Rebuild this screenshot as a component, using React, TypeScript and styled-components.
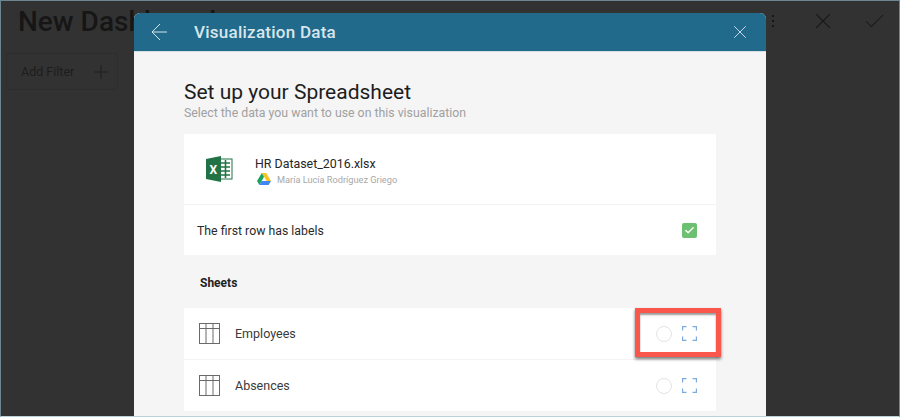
import React from "react";
import styled, { createGlobalStyle } from "styled-components";
import { Check, Plus, X } from "lucide-react";

const GlobalStyle = createGlobalStyle`
  html, body {
    margin: 0;
    padding: 0;
    background: #323232;
    font-family: Roboto, "Liberation Sans", sans-serif;
    overflow: hidden;
  }
`;

const Frame = styled.div`
  position: relative;
  width: 900px;
  height: 417px;
  box-sizing: border-box;
  overflow: hidden;
  background: #323232;
  border: 1px solid #6d8591;
  border-bottom-color: #b9d3d8;
`;

// dashboard behind the dialog
const TopBar = styled.header`
  display: flex;
  align-items: center;
  justify-content: space-between;
  height: 40px;
  padding: 0 12px 0 17px;
`;

const PageTitle = styled.h1`
  margin: 0;
  font-size: 28px;
  font-weight: 500;
  color: #161616;
`;

const TopActions = styled.div`
  display: flex;
  align-items: center;
  gap: 26px;
  color: #1a1a1a;
`;

const Dots = styled.div`
  display: flex;
  flex-direction: column;
  gap: 3px;
  margin-right: 10px;

  span {
    width: 2px;
    height: 2px;
    background: #161616;
  }
`;

const FilterButton = styled.div`
  display: flex;
  align-items: center;
  justify-content: space-between;
  width: 112px;
  height: 37px;
  box-sizing: border-box;
  margin: 12px 0 0 5px;
  padding: 0 5px 0 14px;
  border: 1px solid #2d2d2d;
  border-radius: 4px;
  font-size: 12.5px;
  color: #1d1d1d;
`;

const Dialog = styled.section`
  position: absolute;
  left: 133px;
  top: 12px;
  width: 632px;
  height: 410px;
  background: #f5f5f5;
  border-radius: 6px 6px 0 0;
  overflow: hidden;
`;

const DialogHeader = styled.header`
  display: flex;
  align-items: center;
  height: 38px;
  padding: 0 15px 0 17px;
  background: #216a8b;
  border-bottom: 1px solid #d5dfe3;
  color: #d3e3ea;
`;

const DialogTitle = styled.h2`
  flex: 1;
  margin: 0 0 0 27px;
  font-size: 17px;
  font-weight: 500;
  letter-spacing: 0.25px;
  color: #d7e6ec;
`;

const DialogBody = styled.div`
  padding: 27px 50px 0;
`;

const Heading = styled.h3`
  margin: 0;
  font-size: 21px;
  line-height: 27px;
  font-weight: 400;
  color: #1d1d1d;
`;

const SubHeading = styled.p`
  margin: 0 0 14px;
  font-size: 12.3px;
  line-height: 14px;
  color: #a0a0a0;
`;

const Card = styled.div`
  background: #fff;
`;

const FileRow = styled.div`
  display: flex;
  align-items: center;
  height: 71px;
  padding-left: 22px;
  border-bottom: 1px solid #f2f2f2;
  box-sizing: border-box;
`;

const FileMeta = styled.div`
  margin: 3px 0 0 22px;
`;

const FileName = styled.div`
  font-size: 12.4px;
  line-height: 15px;
  color: #262626;
`;

const Owner = styled.div`
  display: flex;
  align-items: center;
  gap: 6px;
  margin-top: 2px;
  padding-left: 2px;
  font-size: 9.2px;
  color: #a8a8a8;
`;

const LabelRow = styled.div`
  display: flex;
  align-items: center;
  justify-content: space-between;
  height: 50px;
  box-sizing: border-box;
  padding: 1px 19px 0 13px;
  font-size: 12.3px;
  color: #2a2a2a;
`;

const CheckBox = styled.div`
  display: flex;
  align-items: center;
  justify-content: center;
  width: 15px;
  height: 15px;
  border-radius: 2px;
  background: #6cc070;
  color: #fff;
`;

const SectionLabel = styled.div`
  height: 53px;
  padding-left: 16px;
  box-sizing: border-box;
  font-size: 12px;
  font-weight: 700;
  line-height: 57px;
  color: #222;
`;

const SheetRow = styled.div`
  display: flex;
  align-items: center;
  height: 52px;
  box-sizing: border-box;
  padding: 0 19px 0 15px;
  background: #fff;
  border-bottom: 1px solid #f3f3f3;
`;

const SheetName = styled.span`
  flex: 1;
  margin-left: 15px;
  font-size: 12.5px;
  color: #3a3a3a;
`;

const Radio = styled.div`
  width: 14px;
  height: 14px;
  border: 1px solid #e4e4e4;
  border-radius: 50%;
  margin-right: 10px;
`;

const Highlight = styled.div`
  position: absolute;
  left: 634px;
  top: 307px;
  width: 86px;
  height: 49px;
  box-sizing: border-box;
  border: 5px solid #f9574b;
  box-shadow: 0 2px 3px rgba(0, 0, 0, 0.55), inset 0 2px 2px rgba(0, 0, 0, 0.4);
`;

const BackArrow = () => (
  <svg width="16" height="18" viewBox="0 0 16 18" fill="none" stroke="currentColor" strokeWidth="1">
    <path d="M16 9H1M9 1L1 9L9 17" />
  </svg>
);

const ExcelIcon = () => (
  <svg width="27" height="26" viewBox="0 0 27 26">
    <rect x="12" y="3" width="14" height="20" fill="#fff" stroke="#217346" />
    <path d="M15 7h9M15 11h9M15 15h9M15 19h9M19.5 4v18" stroke="#217346" strokeWidth="1.6" />
    <path d="M0 3 L15 0 V26 L0 23 Z" fill="#217346" />
    <text x="3.5" y="18" fontSize="12" fontWeight="700" fill="#fff" fontFamily="Roboto, sans-serif">X</text>
  </svg>
);

const DriveIcon = () => (
  <svg width="14" height="12" viewBox="0 0 14 12">
    <path d="M4.8 0 H9.2 L14 8 H9.6 Z" fill="#f7c325" />
    <path d="M4.8 0 L7 3.8 L2.4 12 L0 8 Z" fill="#1aa260" />
    <path d="M4.6 8 H14 L11.6 12 H2.4 Z" fill="#4285f4" />
  </svg>
);

const TableIcon = () => (
  <svg width="21" height="21" viewBox="0 0 21 21" fill="none" stroke="#6a6a6a" strokeWidth="1">
    <rect x="0.5" y="0.5" width="20" height="20" />
    <path d="M0.5 5.5H20.5M7 0.5V20.5M14 0.5V20.5" />
  </svg>
);

const FocusIcon = () => (
  <svg width="15" height="15" viewBox="0 0 15 15" fill="none" stroke="#7dacdc" strokeWidth="1.2">
    <path d="M0.6 4.5V0.6H4.5M10.5 0.6H14.4V4.5M14.4 10.5V14.4H10.5M4.5 14.4H0.6V10.5" />
  </svg>
);

const sheets = ["Employees", "Absences"];

export default function App() {
  return (
    <Frame>
      <GlobalStyle />
      <TopBar>
        <PageTitle>New Dashboard</PageTitle>
        <TopActions>
          <Dots>
            <span />
            <span />
            <span />
          </Dots>
          <X size={26} strokeWidth={1} />
          <Check size={25} strokeWidth={1} />
        </TopActions>
      </TopBar>
      <FilterButton>
        Add Filter
        <Plus size={22} strokeWidth={1} />
      </FilterButton>

      <Dialog>
        <DialogHeader>
          <BackArrow />
          <DialogTitle>Visualization Data</DialogTitle>
          <X size={22} strokeWidth={1} />
        </DialogHeader>
        <DialogBody>
          <Heading>Set up your Spreadsheet</Heading>
          <SubHeading>Select the data you want to use on this visualization</SubHeading>
          <Card>
            <FileRow>
              <ExcelIcon />
              <FileMeta>
                <FileName>HR Dataset_2016.xlsx</FileName>
                <Owner>
                  <DriveIcon />
                  María Lucía Rodríguez Griego
                </Owner>
              </FileMeta>
            </FileRow>
            <LabelRow>
              The first row has labels
              <CheckBox>
                <Check size={11} strokeWidth={3} />
              </CheckBox>
            </LabelRow>
          </Card>
          <SectionLabel>Sheets</SectionLabel>
          {sheets.map((name) => (
            <SheetRow key={name}>
              <TableIcon />
              <SheetName>{name}</SheetName>
              <Radio />
              <FocusIcon />
            </SheetRow>
          ))}
        </DialogBody>
      </Dialog>
      <Highlight />
    </Frame>
  );
}
